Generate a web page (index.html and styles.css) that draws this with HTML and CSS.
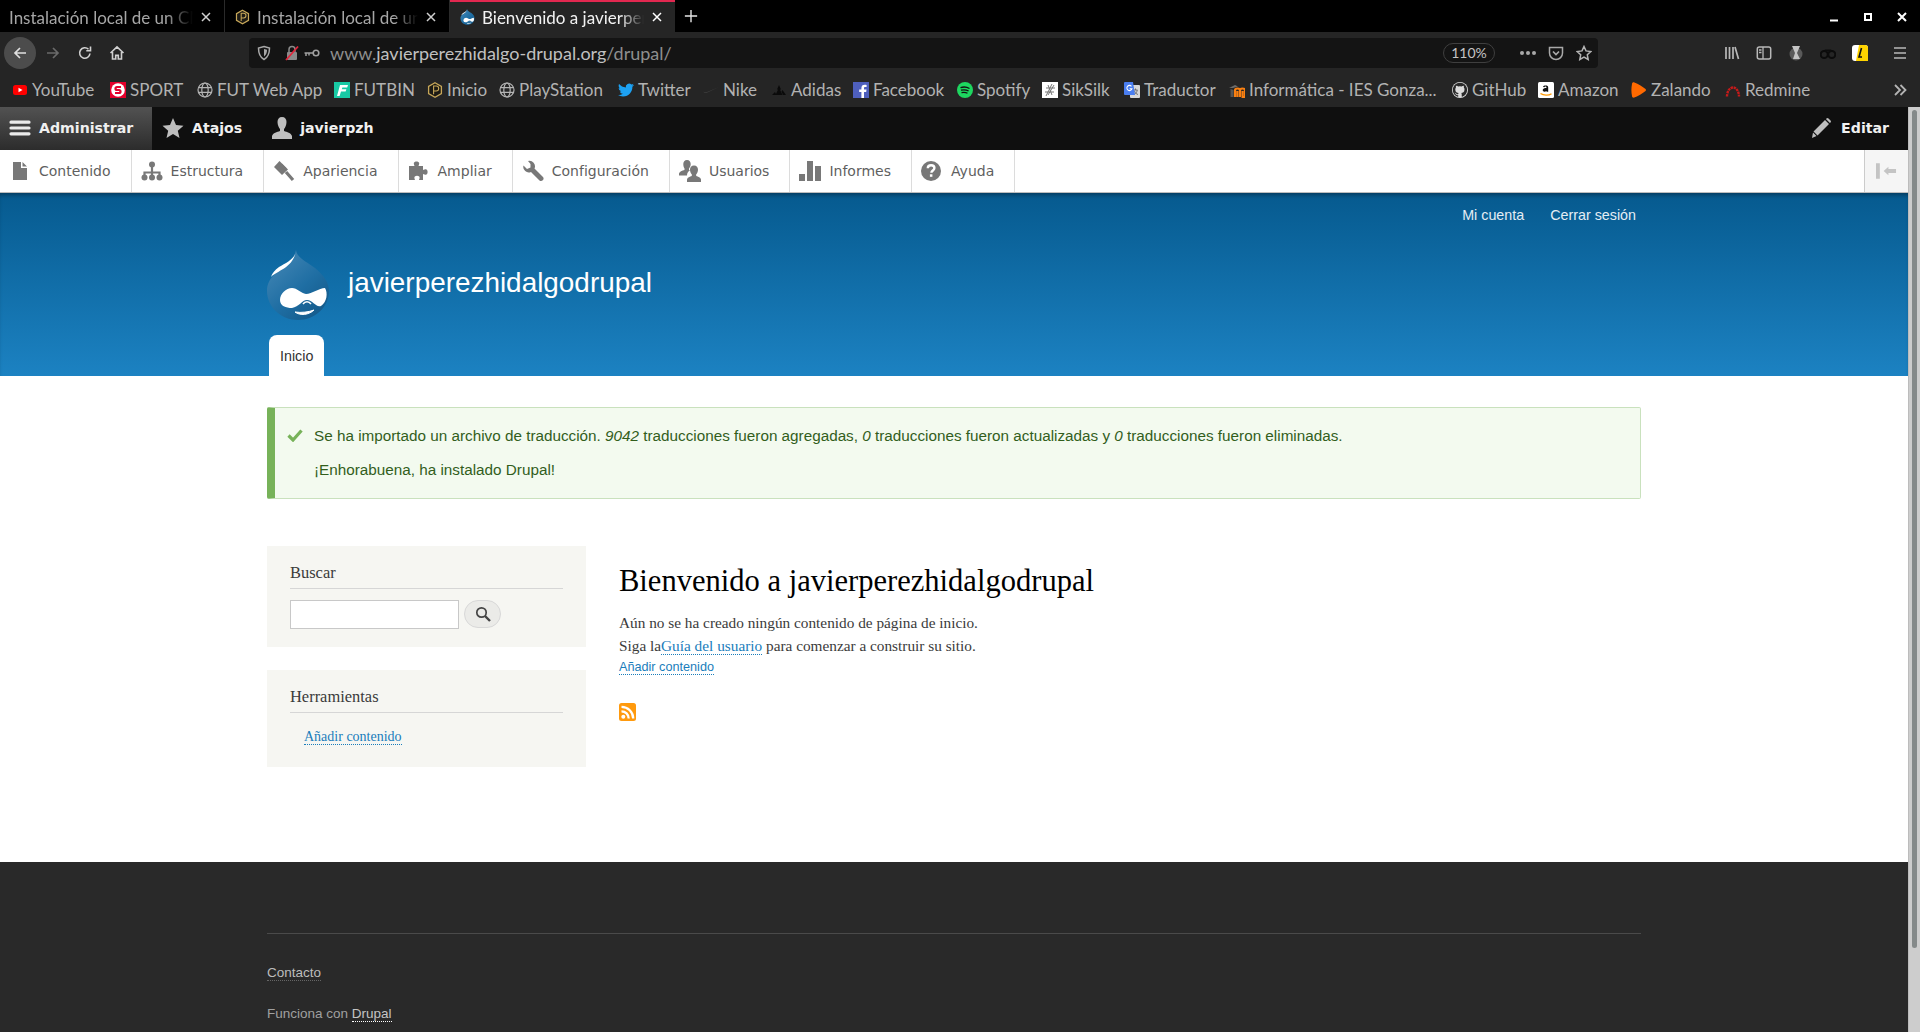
FILE: index.html
```html
<!DOCTYPE html>
<html lang="es">
<head>
	<meta charset="UTF-8">
	<link rel="stylesheet" href="styles.css">
	<title>Bienvenido a javierperezhidalgodrupal</title>
</head>
<body>
	<svg class="defs" width="0" height="0">
		<symbol id="globe" viewBox="0 0 16 16"><g fill="none" stroke="#b4b4b4" stroke-width="1.2"><circle cx="8" cy="8" r="7"/><ellipse cx="8" cy="8" rx="3.2" ry="7"/><path d="M1.3 5.6h13.4M1.3 10.4h13.4"/></g></symbol>
		<symbol id="hex" viewBox="0 0 16 16"><path d="M8 .8l6.4 3.6v7.2L8 15.2 1.6 11.6V4.4z" fill="#1c1a14" stroke="#c7a759" stroke-width="1.3"/><path d="M6.6 3.6v8.6M6.6 4h2.6a2.4 2.4 0 0 1 0 5H6.6" fill="none" stroke="#c7a759" stroke-width="1.1"/></symbol>
		<symbol id="close" viewBox="0 0 10 10"><path d="M1 1l8 8M9 1l-8 8" stroke="currentColor" stroke-width="1.5"/></symbol>
		<symbol id="drop" viewBox="0 0 62 70">
			<path d="M29 0C30 8 40 12 48 18 57 25 62 33 62 41 62 57 48 70 31 70 14 70 0 57 0 41 0 26 14 20 20 14 24 10 28 6 29 0z" fill="url(#dropfill)"/>
			<path d="M29 1C28 9 19 13 12 17 8 20 5 23 4 27 11 20 26 18 29 1z" fill="#fff"/>
			<path d="M13 50C13 44 19 38 25 38 30 38 34 43 39 44 45 44 52 38 58 38 61 43 60 52 54 56 49 58 46 50 40 50 35 50 32 57 25 58 19 58 13 56 13 50z" fill="#fff"/>
			<path d="M28 62C33 66 42 65 47 60 42 62 34 63 28 62z" fill="#fff" stroke="#fff"/>
			<path d="M36 54C38 51 42 51 44 54" fill="none" stroke="#fff" stroke-width="1.5"/>
		</symbol>
		<defs>
			<linearGradient id="dropfill" x1="0" y1="0" x2="0.8" y2="1"><stop offset="0" stop-color="#4a8bb8"/><stop offset="0.6" stop-color="#1f6ea3"/><stop offset="1" stop-color="#145a8a"/></linearGradient>
		</defs>
	</svg>

	<div class="tabbar">
		<div class="tab">
			<span class="tab-title">Instalación local de un CMS</span>
			<svg class="tab-close"><use href="#close"/></svg>
		</div>
		<div class="tab">
			<svg class="fav"><use href="#hex"/></svg>
			<span class="tab-title">Instalación local de un CMS</span>
			<svg class="tab-close"><use href="#close"/></svg>
		</div>
		<div class="tab tab-active">
			<svg class="fav"><use href="#drop"/></svg>
			<span class="tab-title">Bienvenido a javierperezhidalgodrupal</span>
			<svg class="tab-close"><use href="#close"/></svg>
		</div>
		<svg class="tab-new" viewBox="0 0 16 16"><path d="M8 1v14M1 8h14" stroke="#e6e6e6" stroke-width="1.6"/></svg>
		<div class="window-btns">
			<svg viewBox="0 0 12 12"><path d="M2 9.5h8" stroke="#fff" stroke-width="2"/></svg>
			<svg viewBox="0 0 12 12"><rect x="3" y="3" width="6" height="6" fill="none" stroke="#fff" stroke-width="2"/></svg>
			<svg viewBox="0 0 12 12"><path d="M2 2l8 8M10 2l-8 8" stroke="#fff" stroke-width="2"/></svg>
		</div>
	</div>

	<div class="toolbar">
		<div class="nav-btn nav-back"><svg viewBox="0 0 16 16"><path d="M14 8H3M8 3L3 8l5 5" fill="none" stroke="#e0e0e0" stroke-width="1.7"/></svg></div>
		<div class="nav-btn nav-next"><svg viewBox="0 0 16 16"><path d="M2 8h11M8 3l5 5-5 5" fill="none" stroke="#6a6a6a" stroke-width="1.7"/></svg></div>
		<div class="nav-btn"><svg viewBox="0 0 16 16"><path d="M13 8.500A5.200 5.200 0 1 1 11.500 4.300M13.500 1.500v4.200H9.300" fill="none" stroke="#d0d0d0" stroke-width="1.6"/></svg></div>
		<div class="nav-btn"><svg viewBox="0 0 16 16"><path d="M1.500 8L8 1.800 14.500 8M3.500 7v7h3.200v-3.600h2.600V14h3.200V7" fill="none" stroke="#d0d0d0" stroke-width="1.6"/></svg></div>
		<div class="urlbar">
			<svg class="url-ico" viewBox="0 0 16 16"><path d="M8 1.500l5.500 1.500c0 5.500-1 9-5.500 11.500C3.500 12 2.500 8.500 2.500 3z" fill="none" stroke="#a8a8a8" stroke-width="1.500"/><path d="M8 4l3 .8c0 3-.6 5-3 6.600z" fill="#a8a8a8"/></svg>
			<svg class="url-ico" viewBox="0 0 16 16"><rect x="3" y="7" width="10" height="8" rx="1" fill="#8a8a8a"/><path d="M5 7V4.500a3 3 0 0 1 6 0V7" fill="none" stroke="#8a8a8a" stroke-width="1.500"/><path d="M14 1.500L2 15" stroke="#e2263c" stroke-width="1.800"/></svg>
			<svg class="url-key" viewBox="0 0 16 8"><circle cx="12" cy="4" r="2.800" fill="none" stroke="#a0a0a0" stroke-width="1.600"/><path d="M9 4H.5M2 4v3M5 4v2.500" stroke="#a0a0a0" stroke-width="1.500"/></svg>
			<span class="url-text">www.<b>javierperezhidalgo-drupal.org</b>/drupal/</span>
			<span class="url-zoom">110%</span>
			<span class="url-dots"><i></i><i></i><i></i></span>
			<svg class="url-ico" viewBox="0 0 16 16"><path d="M1.500 2.500h13v5.500a6.500 6.500 0 0 1-13 0z" fill="none" stroke="#a8a8a8" stroke-width="1.500"/><path d="M5 6.500l3 3 3-3" fill="none" stroke="#a8a8a8" stroke-width="1.700"/></svg>
			<svg class="url-ico" viewBox="0 0 16 16"><path d="M8 1.500l2 4.400 4.800.6-3.500 3.300.9 4.700L8 12.200l-4.200 2.300.9-4.700L1.200 6.500 6 5.900z" fill="none" stroke="#b4b4b4" stroke-width="1.500"/></svg>
		</div>
		<div class="tool-icons">
			<div class="nav-btn"><svg viewBox="0 0 16 16"><path d="M2 2v12M5.500 2v12M9 2v12M11 2l3.500 12" fill="none" stroke="#b8b8b8" stroke-width="1.700"/></svg></div>
			<div class="nav-btn"><svg viewBox="0 0 16 16"><rect x="1.300" y="2" width="13.400" height="12" rx="2" fill="none" stroke="#b8b8b8" stroke-width="1.500"/><path d="M7 2v12M3 5h2.500M3 7.500h2.500" stroke="#b8b8b8" stroke-width="1.300"/></svg></div>
			<div class="nav-btn"><svg viewBox="0 0 16 16"><circle cx="8" cy="9" r="6.500" fill="#5a5a5a"/><path d="M4 1l8 0-3 7 3 6H5l2-6z" fill="#c4c4c4"/></svg></div>
			<div class="nav-btn"><svg viewBox="0 0 16 16"><circle cx="4.200" cy="9.500" r="3.500" fill="none" stroke="#0c0c0c" stroke-width="2"/><circle cx="11.800" cy="9.500" r="3.500" fill="none" stroke="#0c0c0c" stroke-width="2"/><path d="M3 6.500L5 4.500h6l2 2z" fill="#0c0c0c"/></svg></div>
			<div class="nav-btn"><svg viewBox="0 0 16 16"><rect width="16" height="16" rx="3" fill="#fff"/><path d="M7 0h6a3 3 0 0 1 3 3v13H4z" fill="#ffd400"/><path d="M9.500 3L7 12h3" fill="none" stroke="#111" stroke-width="1.600"/></svg></div>
			<div class="nav-btn"><svg viewBox="0 0 16 16"><path d="M2 3h12M2 8h12M2 13h12" stroke="#b8b8b8" stroke-width="1.700"/></svg></div>
		</div>
	</div>

	<div class="bookmarks">
		<div class="bookmark-grid">
			<div class="bm"><svg viewBox="0 0 16 16"><rect x="1" y="3" width="14" height="10" rx="2.500" fill="#f00"/><path d="M6.500 5.800L10.500 8l-4 2.200z" fill="#fff"/></svg>YouTube</div>
			<div class="bm"><svg viewBox="0 0 16 16"><rect width="16" height="16" fill="#e4002b"/><circle cx="8" cy="8" r="6.800" fill="#fff"/><path d="M11 5H7a1.500 1.500 0 0 0 0 3h2a1.500 1.500 0 0 1 0 3H5" fill="none" stroke="#e4002b" stroke-width="2.200"/></svg>SPORT</div>
			<div class="bm"><svg><use href="#globe"/></svg>FUT Web App</div>
			<div class="bm"><svg viewBox="0 0 16 16"><rect width="16" height="16" fill="#18c9a4"/><path d="M6 3h8l-.8 2.400H8.400L7.800 7.200h4.600l-.8 2.400H7l-1.400 4.400H3z" fill="#fff"/></svg>FUTBIN</div>
			<div class="bm"><svg><use href="#hex"/></svg>Inicio</div>
			<div class="bm"><svg><use href="#globe"/></svg>PlayStation</div>
			<div class="bm"><svg viewBox="0 0 24 24"><path d="M23.950 4.570a10 10 0 0 1-2.820.77 4.960 4.960 0 0 0 2.160-2.720c-.95.55-2 .96-3.120 1.190a4.920 4.920 0 0 0-8.380 4.480C7.690 8.100 4.070 6.130 1.640 3.160a4.820 4.820 0 0 0-.67 2.480c0 1.710.87 3.210 2.190 4.100a4.900 4.900 0 0 1-2.230-.62v.06a4.920 4.920 0 0 0 3.950 4.830 5 5 0 0 1-2.210.08 4.940 4.940 0 0 0 4.600 3.420A9.870 9.870 0 0 1 0 19.540a14 14 0 0 0 7.560 2.210c9.050 0 14-7.500 14-13.980 0-.21 0-.42-.02-.63A9.940 9.940 0 0 0 24 4.590z" fill="#1da1f2"/></svg>Twitter</div>
			<div class="bm"><svg viewBox="0 0 16 16"><path d="M16 5L4.500 9.800C2.500 10.600.8 10.300.5 9.300.3 10.900 1.900 11.500 4 10.700z" fill="#3c3c3c"/></svg>Nike</div>
			<div class="bm"><svg viewBox="0 0 16 16"><path d="M1 13l3-3 1.500 3zM4.500 13L8 5.500 11.500 13zM12 13l-1.500-3.500L11.500 8 15 13zM6 7.500L8 3l2 4.500z" fill="#0a0a0a"/></svg>Adidas</div>
			<div class="bm"><svg viewBox="0 0 16 16"><rect width="16" height="16" fill="#4e5fbd"/><path d="M11 16V10h2.200l.3-2.400H11V6.200c0-.8.300-1.200 1.200-1.200h1.400V2.900C13 2.800 12.300 2.800 11.600 2.800c-2 0-3.200 1.200-3.200 3.300v1.500H6.200V10h2.200v6z" fill="#fff"/></svg>Facebook</div>
			<div class="bm"><svg viewBox="0 0 16 16"><circle cx="8" cy="8" r="8" fill="#1ed760"/><path d="M3.500 5.600c3-.9 6.500-.6 9 .9M4 8.200c2.600-.7 5.500-.4 7.600.8M4.500 10.600c2.100-.5 4.400-.3 6 .7" fill="none" stroke="#111" stroke-width="1.300"/></svg>Spotify</div>
			<div class="bm"><svg viewBox="0 0 16 16"><rect width="16" height="16" fill="#fff"/><path d="M10 2L4 14M12 3L6 13M4 6h9M3 10h9M6 3l4 10" fill="none" stroke="#777" stroke-width="1"/></svg>SikSilk</div>
			<div class="bm"><svg viewBox="0 0 16 16"><rect x="6" y="3" width="10" height="13" rx="1" fill="#d8d8d8"/><path d="M9.500 8h4M11.500 6.500V8M10 12.500c2-1 3-2.500 3.200-4.500M10.500 9c.5 2 2 3 3.500 3.500" fill="none" stroke="#666" stroke-width=".9"/><path d="M1 0h8l2 13H1a1 1 0 0 1-1-1V1a1 1 0 0 1 1-1z" fill="#4a7ef0"/><path d="M7.500 4.300a2.600 2.600 0 1 0 .5 2.400H5.600" fill="none" stroke="#fff" stroke-width="1.100"/></svg>Traductor</div>
			<div class="bm"><svg viewBox="0 0 16 16"><path d="M0 6l6-3 3 1.500L4 6z" fill="#6b6b6b"/><path d="M6 15V8.500c0-2.700 5-2.700 5 0V15M11 8.500c0-2.700 5-2.700 5 0V15h-2.400V9M8.400 15V9" fill="none" stroke="#f98012" stroke-width="2.200"/><path d="M1.500 7v8h3V8z" fill="#555"/></svg>Informática - IES Gonza...</div>
			<div class="bm"><svg viewBox="0 0 16 16"><circle cx="8" cy="8" r="8" fill="#dcdcdc"/><path d="M8 .8C4 .8.800 4 .800 8c0 3.200 2 5.900 4.900 6.800.4.100.5-.2.500-.4v-1.300c-2 .4-2.400-.9-2.400-.9-.3-.8-.8-1-.8-1-.6-.5 0-.5 0-.5.700.1 1.100.7 1.100.7.600 1.100 1.700.8 2.100.6.100-.5.200-.8.400-1-1.600-.2-3.300-.8-3.300-3.500 0-.8.300-1.400.7-1.900-.1-.2-.3-.9.100-1.900 0 0 .6-.2 2 .7a7 7 0 0 1 3.600 0c1.400-.9 2-.7 2-.7.400 1 .2 1.700.1 1.900.5.500.7 1.100.7 1.900 0 2.700-1.700 3.300-3.300 3.500.3.200.5.700.5 1.300v2c0 .2.100.5.500.4 2.900-.9 4.900-3.600 4.900-6.800C15.200 4 12 .8 8 .8z" fill="#2a2a2a"/></svg>GitHub</div>
			<div class="bm"><svg viewBox="0 0 16 16"><rect width="16" height="16" rx="1.500" fill="#fff"/><path d="M5 5c.3-1.200 1.300-1.600 2.700-1.600 1.500 0 2.500.6 2.500 2v4.300h-1.600l-.2-.8c-1.200 1.300-3.700 1.100-3.700-.8 0-1.700 1.800-2.200 3.700-2.200V5.500c0-.7-.4-.9-.9-.9-.6 0-.9.300-1 .7z" fill="#111"/><path d="M2.500 11.500c3 2 8 2.300 11 .2" fill="none" stroke="#f90" stroke-width="1.400"/></svg>Amazon</div>
			<div class="bm"><svg viewBox="0 0 16 16"><path d="M1 2c0-1.500 1.200-2 2.400-1.600 4 1.500 7.600 3.800 10.800 6.300 1 .7 1 1.900 0 2.600C11 11.800 7.500 14 3.400 15.600 2.200 16 1 15.500 1 14 .200 10 .200 6 1 2z" fill="#ff6900"/></svg>Zalando</div>
			<div class="bm"><svg viewBox="0 0 16 16"><path d="M2 14.500A6 9 0 0 1 14 14.500" fill="none" stroke="#c61a1a" stroke-width="2.400" stroke-dasharray="2.400 .7"/></svg>Redmine</div>
		</div>
		<svg class="bm-more" viewBox="0 0 14 14"><path d="M2 2l5 5-5 5M7.500 2l5 5-5 5" fill="none" stroke="#b4b4b4" stroke-width="1.800"/></svg>
	</div>

	<div class="viewport">
		<div class="page">
			<div class="admin-bar">
				<a class="admin-item admin-manage">
					<svg class="admin-ico" viewBox="0 0 22 16"><path d="M2 2.200h18M2 8h18M2 13.800h18" stroke="#eaeaea" stroke-width="3.200" stroke-linecap="round"/></svg>
					Administrar
				</a>
				<a class="admin-item admin-star">
					<svg viewBox="0 0 22 22"><path d="M11 1l3 7 7.500.7-5.700 5 1.700 7.300-6.500-3.900L4.500 21l1.700-7.300-5.700-5L8 8z" fill="#bebebe"/></svg>
					Atajos
				</a>
				<a class="admin-item admin-user">
					<svg viewBox="0 0 22 22"><path d="M11 0c3 0 4.500 2 4.500 5s-1.500 6-2.500 7v2c3 1 7 2 8 5v3H1v-3c1-3 5-4 8-5v-2C8 11 6.500 8 6.500 5s1.500-5 4.500-5z" fill="#bebebe"/></svg>
					javierpzh
				</a>
				<a class="admin-item admin-edit">
					<svg viewBox="0 0 20 20"><path d="M14 2l4 4L6.500 17.500l-4-4zM15.500.5a1.500 1.500 0 0 1 2 0l2 2a1.500 1.500 0 0 1 0 2l-.6.6-4-4zM2 14.500l3.500 3.500L1 20z" fill="#bebebe"/></svg>
					Editar
				</a>
			</div>

			<div class="tray">
				<a class="tray-item"><svg viewBox="0 0 22 22"><path d="M4 2h8v6h6v12H4zM13.500 2L18 6.500h-4.500z" fill="#787878"/></svg>Contenido</a>
				<a class="tray-item"><svg viewBox="0 0 22 22"><circle cx="11" cy="4.500" r="3" fill="#787878"/><path d="M11 7v8M3.500 16v-3.500h15V16" fill="none" stroke="#787878" stroke-width="2.200"/><circle cx="3.500" cy="17.500" r="3" fill="#787878"/><circle cx="11" cy="17.500" r="3" fill="#787878"/><circle cx="18.500" cy="17.500" r="3" fill="#787878"/></svg>Estructura</a>
				<a class="tray-item"><svg viewBox="0 0 22 22"><path d="M1 7l5.500-6L15 9.500 9 15z" fill="#787878"/><path d="M8 5l4.500 4.500M13 12l7 8" stroke="#787878" stroke-width="3.200" fill="none"/></svg>Apariencia</a>
				<a class="tray-item"><svg viewBox="0 0 22 22"><path d="M1 6h5.500C6 4.500 5.500 3.500 6 2.500 7 1 10 1 11 2.500c.5 1 0 2-.5 3.500H15v4c1.500-.5 2.500-1 3.500-.5 1.500 1 1.500 4 0 5-1 .5-2 0-3.500-.5v6h-4c.5-1.500 1-2.500.2-3.500-1.200-1-3.200-1-4.400 0-.8 1-.3 2 .2 3.500H1z" fill="#787878"/></svg>Ampliar</a>
				<a class="tray-item"><svg viewBox="0 0 22 22"><path d="M6 1a5.500 5.500 0 0 1 6.500 7.500L21 17a2.500 2.500 0 0 1-3.500 3.500L9 12A5.500 5.500 0 0 1 1.500 5.500L5 9l3.500-1.500L8.500 4z" fill="#787878"/></svg>Configuración</a>
				<a class="tray-item"><svg viewBox="0 0 22 22"><path d="M8 0c2.500 0 3.700 1.700 3.700 4 0 1.700-.7 3.300-1.700 4.500v1.500l1 .5c-2 1-3 2.500-3 5H0v-2c.5-2 3-3 5.500-3.500v-1.500C4.700 7.300 4.300 5.700 4.300 4 4.300 1.700 5.500 0 8 0z" fill="#787878"/><path d="M15 5.500c2.700 0 4 1.800 4 4.200 0 1.800-.7 3.400-1.800 4.600V16c2 .7 4.300 1.300 4.800 3.500V22H8v-2.500c.5-2.200 2.800-2.800 4.800-3.500v-1.700C11.700 13.100 11 11.500 11 9.700c0-2.400 1.300-4.200 4-4.200z" fill="#787878"/></svg>Usuarios</a>
				<a class="tray-item"><svg viewBox="0 0 22 22"><path d="M0 14h6v7H0zM8 1h6v20H8zM16 6h6v15h-6z" fill="#787878"/></svg>Informes</a>
				<a class="tray-item"><svg viewBox="0 0 22 22"><circle cx="10" cy="11" r="10" fill="#787878"/><path d="M6.800 8.200c0-2 1.500-3 3.300-3 2 0 3.300 1.100 3.300 2.800 0 2.500-3 2.500-3 4.800" fill="none" stroke="#fff" stroke-width="2.400"/><rect x="8.900" y="14.300" width="2.500" height="2.500" fill="#fff"/></svg>Ayuda</a>
				<div class="tray-toggle"><svg viewBox="0 0 22 16"><path d="M0 0h4v16H0zM8 8l5-4.500V6h8v4h-8v2.500z" fill="#c4c4c4"/></svg></div>
			</div>

			<header class="site-header">
				<div class="site-inner">
					<div class="secondary-menu">
						<a>Mi cuenta</a>
						<a>Cerrar sesión</a>
					</div>
					<div class="branding">
						<svg class="logo"><use href="#drop"/></svg>
						<span class="site-name">javierperezhidalgodrupal</span>
					</div>
					<div class="primary-tabs"><a class="primary-tab">Inicio</a></div>
				</div>
			</header>

			<main class="main">
				<div class="message">
					<svg class="message-check" viewBox="0 0 16 14"><path d="M1.500 7.500L6 12 14.500 2.500" fill="none" stroke="#77b259" stroke-width="3.200"/></svg>
					<div>
						<div>Se ha importado un archivo de traducción. <em>9042</em> traducciones fueron agregadas, <em>0</em> traducciones fueron actualizadas y <em>0</em> traducciones fueron eliminadas.</div>
						<div>¡Enhorabuena, ha instalado Drupal!</div>
					</div>
				</div>

				<div class="columns">
					<aside class="sidebar">
						<section class="block">
							<h2 class="block-title">Buscar</h2>
							<div class="search-row">
								<input class="search-input" type="text">
								<button class="search-btn"><svg viewBox="0 0 16 16"><circle cx="6.500" cy="6.500" r="4.700" fill="none" stroke="#444" stroke-width="1.700"/><path d="M10 10l5 5" stroke="#444" stroke-width="2.400"/></svg></button>
							</div>
						</section>
						<section class="block">
							<h2 class="block-title">Herramientas</h2>
							<ul class="block-links"><li><a class="link">Añadir contenido</a></li></ul>
						</section>
					</aside>
					<div class="content">
						<h1 class="page-title">Bienvenido a javierperezhidalgodrupal</h1>
						<p>Aún no se ha creado ningún contenido de página de inicio.</p>
						<p>Siga la<a class="link">Guía del usuario</a> para comenzar a construir su sitio.</p>
						<div class="action"><a class="link">Añadir contenido</a></div>
						<svg class="rss" viewBox="0 0 17 18"><rect width="17" height="18" rx="2.500" fill="#ff9a0e"/><circle cx="4.300" cy="13.700" r="2" fill="#fff"/><path d="M2.500 8.300a7.200 7.200 0 0 1 7.200 7.200M2.500 3.800a11.700 11.700 0 0 1 11.700 11.700" fill="none" stroke="#fff" stroke-width="2.300"/></svg>
					</div>
				</div>
			</main>

			<footer class="site-footer">
				<div class="footer-inner">
					<div class="footer-line"><a class="footer-contact">Contacto</a></div>
					<div class="footer-line footer-power">Funciona con <a>Drupal</a></div>
				</div>
			</footer>
		</div>
		<div class="scrollbar"><div class="scroll-thumb"></div></div>
	</div>
</body>
</html>
```

FILE: styles.css
```css
* {
	box-sizing: border-box;
}
html, body {
	height: 100%;
}
body {
	margin: 0;
	display: flex;
	flex-direction: column;
	overflow: hidden;
	background: #000;
	font-family: "Liberation Sans", sans-serif;
}
.defs {
	position: absolute;
}

/* browser tabs */
.tabbar {
	height: 32px;
	display: flex;
	background: #000;
	font-family: Lato, "Noto Sans", sans-serif;
	font-size: 17px;
	color: #a6a6a6;
}
.tab {
	width: 225px;
	display: flex;
	align-items: center;
	padding: 2px 13px 0 10px;
	border-right: 1px solid #2a2a2a;
}
.tab:first-child {
	padding-left: 9px;
}
.tab-active {
	background: #252525;
	color: #f2f2f2;
	border-right: 0;
	border-top: 2px solid #e22850;
	padding-top: 0;
}
.fav {
	width: 15px;
	height: 16px;
	margin-right: 7px;
	flex: none;
}
.tab-title {
	flex: 1;
	white-space: nowrap;
	overflow: hidden;
	-webkit-mask-image: linear-gradient(to right, #000 85%, transparent);
	mask-image: linear-gradient(to right, #000 85%, transparent);
}
.tab-close {
	width: 10px;
	height: 10px;
	margin-left: 8px;
	flex: none;
	color: #d0d0d0;
}
.tab-active .tab-close {
	color: #fff;
}
.tab-new {
	width: 14px;
	height: 14px;
	margin: 9px 0 0 9px;
}
.window-btns {
	margin-left: auto;
	display: flex;
	gap: 22px;
	padding: 11px 12px 0 0;
}
.window-btns svg {
	width: 12px;
	height: 12px;
}

/* browser toolbar */
.toolbar {
	height: 38px;
	display: flex;
	padding-top: 5px;
	background: #252525;
	font-family: Lato, "Noto Sans", sans-serif;
}
.nav-btn {
	width: 32px;
	height: 32px;
	display: flex;
	align-items: center;
	justify-content: center;
	flex: none;
}
.nav-btn svg {
	width: 16px;
	height: 16px;
}
.nav-back {
	margin-left: 4px;
	border-radius: 50%;
	background: #4c4c4c;
}
.nav-next {
	margin-left: 1px;
}
.urlbar {
	width: 1349px;
	height: 30px;
	margin: 1px 0 0 116px;
	padding: 0 6px 0 7px;
	display: flex;
	align-items: center;
	border-radius: 4px;
	background: #141414;
	color: #8e8e8e;
}
.url-ico {
	width: 16px;
	height: 16px;
	flex: none;
}
.url-ico + .url-ico {
	margin-left: 12px;
}
.url-key {
	width: 16px;
	height: 8px;
	margin-left: 4px;
}
.url-text {
	margin-left: 10px;
	font-size: 18px;
}
.url-text b {
	font-weight: 400;
	color: #c0c0c0;
}
.url-zoom {
	margin-left: auto;
	width: 52px;
	height: 20px;
	line-height: 18px;
	text-align: center;
	border: 1px solid #3f3f3f;
	border-radius: 10px;
	font-size: 14px;
	color: #c4c4c4;
}
.url-dots {
	display: flex;
	gap: 2px;
	margin: 0 12px 0 25px;
}
.url-dots i {
	width: 4px;
	height: 4px;
	border-radius: 50%;
	background: #a8a8a8;
}
.tool-icons {
	display: flex;
	margin-left: 118px;
}
.tool-icons .nav-btn:last-child {
	margin-left: 8px;
}

/* bookmarks */
.bookmarks {
	height: 37px;
	display: flex;
	align-items: center;
	padding: 2px 0 0 12px;
	background: #252525;
	font-family: Lato, "Noto Sans", sans-serif;
	font-size: 17px;
	color: #b2b2b2;
}
.bookmark-grid {
	flex: 1;
	display: grid;
	grid-template-columns: 98px 87px 137px 93px 72px 119px 85px 68px 82px 104px 85px 82px 105px 223px 86px 93px 94px 90px;
	align-items: center;
}
.bm {
	display: flex;
	align-items: center;
	gap: 4px;
	white-space: nowrap;
}
.bm svg {
	width: 16px;
	height: 16px;
	flex: none;
}
.bm-more {
	width: 14px;
	height: 14px;
	margin-right: 13px;
}

/* page */
.viewport {
	flex: 1;
	display: flex;
	min-height: 0;
}
.page {
	flex: 1;
	display: flex;
	flex-direction: column;
	min-width: 0;
	background: #fff;
}
.scrollbar {
	width: 12px;
	padding: 3px 3px 0 3px;
	background: #cdcdcd;
	border-left: 1px solid #bcbcbc;
}
.scroll-thumb {
	height: 838px;
	border-radius: 3px;
	background: #858a8a;
}

/* admin toolbar */
.admin-bar {
	height: 43px;
	display: flex;
	background: #0f0f0f;
	font-family: "DejaVu Sans", sans-serif;
	font-size: 14.15px;
	font-weight: 700;
	color: #f0f0f0;
}
.admin-item {
	display: flex;
	align-items: center;
	padding-bottom: 1px;
}
.admin-item svg {
	width: 22px;
	height: 22px;
	flex: none;
}
.admin-manage {
	width: 152px;
	padding-left: 9px;
	gap: 8px;
	background: linear-gradient(#525252, #2c2c2c);
}
.admin-star {
	margin-left: 10px;
	gap: 8px;
}
.admin-user {
	margin-left: 29px;
	gap: 7px;
}
.admin-edit {
	margin-left: auto;
	padding-right: 19px;
	gap: 10px;
}
.admin-edit svg {
	width: 20px;
	height: 20px;
}

.tray {
	height: 43px;
	display: flex;
	background: #fff;
	border-bottom: 1px solid #bdbdbd;
	font-family: "DejaVu Sans", sans-serif;
	font-size: 14px;
	color: #5f5f5f;
}
.tray-item {
	display: flex;
	align-items: center;
	gap: 8px;
	padding: 0 20px 0 9px;
	border-right: 1px solid #dcdcdc;
}
.tray-item svg {
	width: 22px;
	height: 22px;
	flex: none;
}
.tray-toggle {
	margin-left: auto;
	width: 44px;
	display: flex;
	align-items: center;
	justify-content: center;
	background: #f5f5f5;
	border-left: 1px solid #ccc;
}
.tray-toggle svg {
	width: 21px;
	height: 16px;
}

/* site header */
.site-header {
	height: 183px;
	background: linear-gradient(#065a8f, #1c82c2);
	box-shadow: inset 0 4px 4px -2px rgba(0, 0, 0, 0.35);
}
.site-inner, .main, .footer-inner {
	width: 1374px;
	margin: 0 auto;
}
.secondary-menu {
	display: flex;
	justify-content: flex-end;
	gap: 26px;
	padding: 13px 5px 0 0;
	line-height: 18px;
	font-size: 14.3px;
	color: #e4edf4;
}
.branding {
	display: flex;
	align-items: center;
	gap: 19px;
	margin-top: 26px;
}
.logo {
	width: 62px;
	height: 70px;
	flex: none;
}
.site-name {
	margin-bottom: 4px;
	line-height: 34px;
	font-size: 27.9px;
	color: #fff;
}
.primary-tabs {
	margin: 15px 0 0 2px;
	display: flex;
}
.primary-tab {
	height: 41px;
	padding: 1px 11px 0;
	line-height: 41px;
	border-radius: 8px 8px 0 0;
	background: #fff;
	font-size: 14.3px;
	color: #333;
}

/* main */
.main {
	flex: 1;
	min-height: 0;
	color: #3b3b3b;
}
.message {
	display: flex;
	gap: 11px;
	margin-top: 31px;
	padding: 11px 12px;
	height: 92px;
	background: #f3faef;
	border: 1px solid #c9e1bd;
	border-left: 8px solid #77b259;
	border-radius: 2px;
	line-height: 34px;
	font-size: 15.27px;
	color: #325e1c;
}
.message-check {
	width: 16px;
	height: 14px;
	margin-top: 9px;
	flex: none;
}
.columns {
	display: flex;
	gap: 33px;
	margin-top: 47px;
}
.sidebar {
	width: 319px;
	flex: none;
}
.block {
	padding: 16px 23px 18px;
	background: #f6f6f2;
}
.block + .block {
	margin-top: 23px;
	padding-bottom: 21px;
}
.block-title {
	margin: 0;
	padding-bottom: 4px;
	border-bottom: 1px solid #d6d6d6;
	line-height: 22px;
	font-family: "Liberation Serif", serif;
	font-size: 16.45px;
	font-weight: 400;
	color: #3b3b3b;
}
.search-row {
	display: flex;
	gap: 5px;
	margin-top: 11px;
}
.search-input {
	width: 169px;
	height: 29px;
	padding: 0;
	background: #fff;
	border: 1px solid #c8c8c8;
	border-radius: 0;
}
.search-btn {
	width: 37px;
	height: 28px;
	padding: 0;
	display: flex;
	align-items: center;
	justify-content: center;
	border: 1px solid #d8d8d8;
	border-radius: 14px;
	background: #ebebe8;
}
.search-btn svg {
	width: 16px;
	height: 16px;
}
.block-links {
	list-style: none;
	margin: 15px 0 0;
	padding: 0 0 0 14px;
	line-height: 18px;
	font-family: "Liberation Serif", serif;
	font-size: 14px;
}
.link {
	color: #1a7dbb;
	border-bottom: 1px dotted #1a7dbb;
}
.content {
	flex: 1;
	padding-top: 15px;
	font-family: "Liberation Serif", serif;
	font-size: 15.3px;
	line-height: 23px;
	color: #3b3b3b;
}
.page-title {
	margin: 0 0 10px;
	line-height: 40px;
	font-size: 30.56px;
	font-weight: 400;
	color: #000;
}
.content p {
	margin: 0;
}
.action {
	margin-top: 1px;
	line-height: 18px;
	font-family: "Liberation Sans", sans-serif;
	font-size: 12.67px;
}
.rss {
	display: block;
	width: 17px;
	height: 18px;
	margin-top: 27px;
}

/* footer */
.site-footer {
	height: 170px;
	flex: none;
	padding-top: 71px;
	background: #292929;
	font-size: 13.5px;
	color: #a0a0a0;
}
.footer-inner {
	padding-top: 29px;
	border-top: 1px solid #4a4a4a;
}
.footer-line {
	line-height: 20px;
}
.footer-power {
	margin-top: 21px;
}
.footer-contact {
	color: #bcbcbc;
	border-bottom: 1px dotted #666;
}
.footer-power a {
	color: #c4c4c4;
	border-bottom: 1px dotted #fff;
}
```
